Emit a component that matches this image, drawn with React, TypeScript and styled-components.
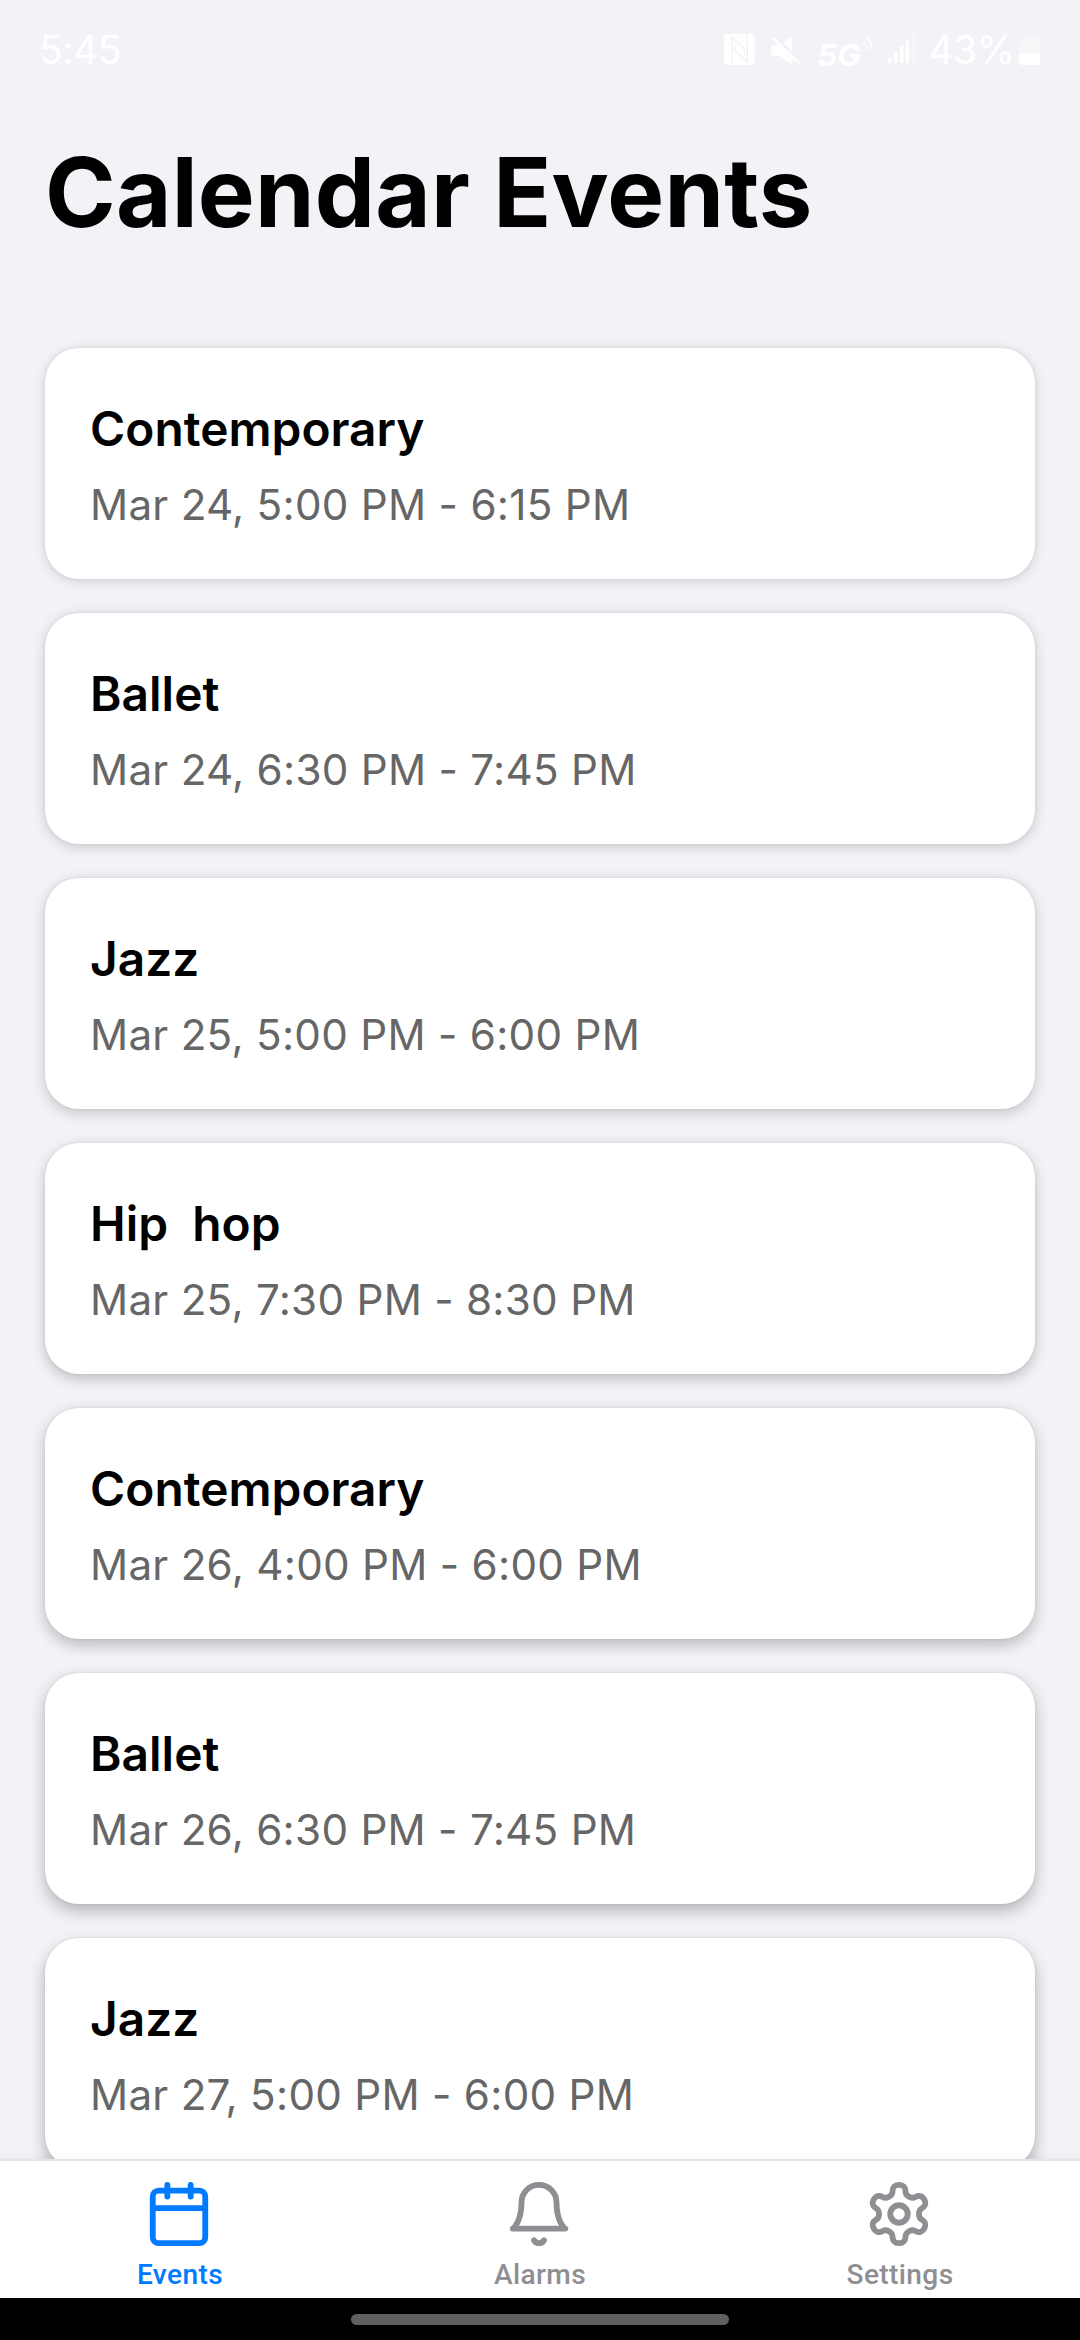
import React from 'react';
import styled, { createGlobalStyle } from 'styled-components';

const GlobalStyle = createGlobalStyle`
  *, *::before, *::after { box-sizing: border-box; }
  html, body { margin: 0; padding: 0; background: #f2f2f7; }
  body { font-family: Inter, 'Noto Sans', sans-serif; }
`;

const Screen = styled.div`
  display: flex;
  flex-direction: column;
  width: 1080px;
  height: 2340px;
  overflow: hidden;
  background: #f2f2f7;
`;

const StatusBar = styled.header`
  display: flex;
  justify-content: space-between;
  align-items: flex-start;
  flex: none;
  height: 100px;
  padding: 0 40px 0 39px;
  color: #fff;
`;

const StatusText = styled.span`
  font-size: 39px;
  line-height: 99px;
  letter-spacing: -0.5px;
  white-space: nowrap;
`;

const StatusIcons = styled.div`
  display: flex;
  align-items: center;
`;

const Glyph = styled.svg<{ $before?: number }>`
  display: block;
  flex: none;
  margin-left: ${(p) => p.$before ?? 0}px;
  overflow: visible;
`;

const BatteryLevel = styled(StatusText)`
  margin-left: 13.5px;
`;

const PageHeader = styled.div`
  flex: none;
  height: 214px;
  padding: 32px 45px 0;
`;

const PageTitle = styled.h1`
  margin: 0;
  font-size: 95.6px;
  line-height: 120px;
  font-weight: 700;
  letter-spacing: 0.25px;
  color: #000;
  white-space: nowrap;
`;

const EventList = styled.main`
  display: flex;
  flex-direction: column;
  gap: 34px;
  flex: 1 1 0;
  min-height: 0;
  padding: 34px 45px 0;
  overflow: hidden;
`;

const EventCard = styled.article<{ $depth: number }>`
  flex: none;
  height: 231px;
  padding: 45px;
  border-radius: 34px;
  background: #fff;
  box-shadow:
    0 ${(p) => 2 + p.$depth * 0.9}px ${(p) => 12 + p.$depth * 0.7}px rgba(0, 0, 0, ${(p) => 0.15 + p.$depth * 0.02}),
    0 0 3px rgba(0, 0, 0, 0.08);
`;

const EventName = styled.h2`
  margin: 0 0 12px;
  font-size: 47.8px;
  line-height: 72px;
  font-weight: 600;
  letter-spacing: 0.04px;
  color: #000;
  white-space: pre;
`;

const EventTime = styled.p`
  margin: 0;
  font-size: 42.2px;
  line-height: 55px;
  letter-spacing: 0.27px;
  color: #666;
  white-space: nowrap;
`;

const TabBar = styled.nav`
  position: relative;
  display: flex;
  flex: none;
  height: 139px;
  border-top: 2px solid #e5e5e7;
  background: #fff;
  box-shadow: 0 0 10px rgba(0, 0, 0, 0.06);
`;

const Tab = styled.a<{ $active?: boolean }>`
  display: flex;
  flex: 1 1 0;
  flex-direction: column;
  align-items: center;
  padding-top: 18px;
  color: ${(p) => (p.$active ? '#007aff' : '#8e8e93')};
`;

const TabIcon = styled.svg`
  display: block;
  width: 70px;
  height: 70px;
  margin-right: 2px;
  fill: none;
  stroke: currentColor;
  stroke-width: 2;
  stroke-linecap: round;
  stroke-linejoin: round;
`;

const TabLabel = styled.span`
  margin-top: 8px;
  font-family: Roboto, 'Noto Sans', sans-serif;
  font-size: 28.1px;
  line-height: 35px;
  font-weight: 500;
  letter-spacing: 0.38px;
`;

const GestureBar = styled.footer`
  display: flex;
  flex: none;
  justify-content: center;
  height: 42px;
  padding-top: 16px;
  background: #000;
`;

const GestureHandle = styled.div`
  width: 378px;
  height: 11px;
  border-radius: 6px;
  background: #5f5f5f;
`;

const events = [
  { name: 'Contemporary', time: 'Mar 24, 5:00 PM - 6:15 PM' },
  { name: 'Ballet', time: 'Mar 24, 6:30 PM - 7:45 PM' },
  { name: 'Jazz', time: 'Mar 25, 5:00 PM - 6:00 PM' },
  { name: 'Hip  hop', time: 'Mar 25, 7:30 PM - 8:30 PM' },
  { name: 'Contemporary', time: 'Mar 26, 4:00 PM - 6:00 PM' },
  { name: 'Ballet', time: 'Mar 26, 6:30 PM - 7:45 PM' },
  { name: 'Jazz', time: 'Mar 27, 5:00 PM - 6:00 PM' },
];

const NfcIcon = () => (
  <Glyph width="31" height="31" viewBox="0 0 31 31">
    <rect width="31" height="31" rx="4" fill="#fff" />
    <path
      d="M9.3 31C7.6 28 7.8 25 7.8 21V3.2L20.3 14.5V20M21.7 0C23.4 3 23.2 6 23.2 10V27.8L10.7 16.5V11"
      fill="none"
      stroke="#f2f2f7"
      strokeWidth="1.5"
    />
  </Glyph>
);

const MuteIcon = () => (
  <Glyph $before={16} width="29" height="29" viewBox="0 0 29 29">
    <path d="M21.3 2V16.6L12.7 8L19.6 1.4Q21.3 .2 21.3 2Z" fill="#fff" />
    <path d="M2 10.5H7.6L21.3 24V28Q21.3 30 19.4 28.8L9.5 21H3Q0 21 0 18V13Q0 10.5 2 10.5Z" fill="#fff" />
    <path d="M2 3.2L27.5 28" fill="none" stroke="#fff" strokeWidth="2.4" strokeLinecap="round" />
  </Glyph>
);

const NetworkIcon = () => (
  <Glyph $before={17} width="56" height="31" viewBox="0 0 56 31">
    <text
      x="0"
      y="31.8"
      textLength="44"
      lengthAdjust="spacingAndGlyphs"
      fill="#fff"
      fontFamily="Inter, sans-serif"
      fontSize="30"
      fontStyle="italic"
      fontWeight="700"
    >
      5G
    </text>
    <path d="M46 8Q50 10.6 50.2 15.4M49.3 3.8Q54.8 7.6 55.2 15.4" fill="none" stroke="#fff" strokeWidth="2" />
  </Glyph>
);

const SignalIcon = () => (
  <Glyph $before={15} width="27" height="29" viewBox="0 0 27 29" fill="#fff">
    <rect x="0" y="22.5" width="4" height="6" rx="2" />
    <rect x="6" y="17" width="3.6" height="11.5" rx="1.8" />
    <rect x="11.8" y="11" width="3.6" height="17.5" rx="1.8" />
    <rect x="17.6" y="5.2" width="3.6" height="23.3" rx="1.8" />
    <rect x="23.4" y="0" width="3.6" height="28.5" rx="1.8" opacity="0.4" />
  </Glyph>
);

const BatteryIcon = () => (
  <Glyph $before={4.5} width="21" height="31" viewBox="0 0 21 31" fill="#fff">
    <path d="M6 3.5V2Q6 0 8 0H13Q15 0 15 2V3.5H18Q21 3.5 21 6.5V20H0V6.5Q0 3.5 3 3.5Z" opacity="0.4" />
    <path d="M0 20H21V28Q21 31 18 31H3Q0 31 0 28Z" />
  </Glyph>
);

const CalendarIcon = () => (
  <TabIcon viewBox="0 0 24 24">
    <path d="M8 2v4M16 2v4M3 10h18" />
    <rect x="3" y="4" width="18" height="18" rx="2" />
  </TabIcon>
);

const BellIcon = () => (
  <TabIcon viewBox="0 0 24 24">
    <path d="M6 8a6 6 0 0 1 12 0c0 7 3 9 3 9H3s3-2 3-9" />
    <path d="M10.3 21a1.94 1.94 0 0 0 3.4 0" />
  </TabIcon>
);

const GearIcon = () => (
  <TabIcon viewBox="0 0 24 24">
    <path d="M12.22 2h-.44a2 2 0 0 0-2 2v.18a2 2 0 0 1-1 1.73l-.43.25a2 2 0 0 1-2 0l-.15-.08a2 2 0 0 0-2.73.73l-.22.38a2 2 0 0 0 .73 2.73l.15.1a2 2 0 0 1 1 1.72v.51a2 2 0 0 1-1 1.74l-.15.09a2 2 0 0 0-.73 2.73l.22.38a2 2 0 0 0 2.73.73l.15-.08a2 2 0 0 1 2 0l.43.25a2 2 0 0 1 1 1.73V20a2 2 0 0 0 2 2h.44a2 2 0 0 0 2-2v-.18a2 2 0 0 1 1-1.73l.43-.25a2 2 0 0 1 2 0l.15.08a2 2 0 0 0 2.73-.73l.22-.39a2 2 0 0 0-.73-2.73l-.15-.08a2 2 0 0 1-1-1.74v-.5a2 2 0 0 1 1-1.74l.15-.09a2 2 0 0 0 .73-2.73l-.22-.38a2 2 0 0 0-2.73-.73l-.15.08a2 2 0 0 1-2 0l-.43-.25a2 2 0 0 1-1-1.73V4a2 2 0 0 0-2-2z" />
    <circle cx="12" cy="12" r="3" />
  </TabIcon>
);

export default function App() {
  return (
    <>
      <GlobalStyle />
      <Screen>
        <StatusBar>
          <StatusText>5:45</StatusText>
          <StatusIcons>
            <NfcIcon />
            <MuteIcon />
            <NetworkIcon />
            <SignalIcon />
            <BatteryLevel>43%</BatteryLevel>
            <BatteryIcon />
          </StatusIcons>
        </StatusBar>
        <PageHeader>
          <PageTitle>Calendar Events</PageTitle>
        </PageHeader>
        <EventList>
          {events.map((event, index) => (
            <EventCard key={index} $depth={index}>
              <EventName>{event.name}</EventName>
              <EventTime>{event.time}</EventTime>
            </EventCard>
          ))}
        </EventList>
        <TabBar>
          <Tab $active>
            <CalendarIcon />
            <TabLabel>Events</TabLabel>
          </Tab>
          <Tab>
            <BellIcon />
            <TabLabel>Alarms</TabLabel>
          </Tab>
          <Tab>
            <GearIcon />
            <TabLabel>Settings</TabLabel>
          </Tab>
        </TabBar>
        <GestureBar>
          <GestureHandle />
        </GestureBar>
      </Screen>
    </>
  );
}
